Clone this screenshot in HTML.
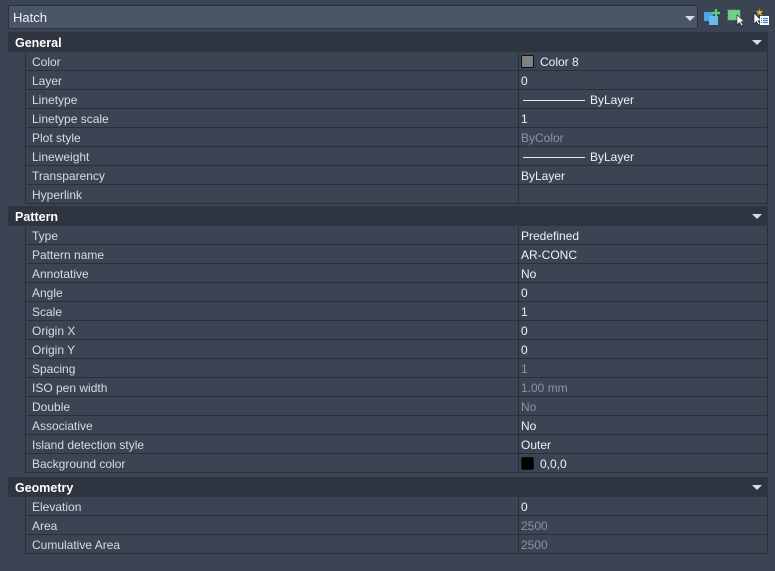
<!DOCTYPE html>
<html><head><style>
*{margin:0;padding:0;box-sizing:border-box}
body{width:775px;height:571px;background:#3b4453;font-family:"Liberation Sans",sans-serif;font-size:12px;color:#e6eaf0;position:relative;overflow:hidden}
.dd{position:absolute;left:8px;top:5px;width:690px;height:24px;background:#4a5568;border:1px solid #2c323d;border-radius:2px}
.dd span{position:absolute;left:4px;top:4px;font-size:13px;color:#eef1f5}
.tri{position:absolute;width:0;height:0;border-left:5px solid transparent;border-right:5px solid transparent;border-top:5px solid #d8dde5}
.hdr{position:absolute;left:8px;width:760px;height:20px;background:#2e3440}
.hdr b{position:absolute;left:7px;top:4px;font-size:12.5px;color:#fff}
.row{position:absolute;left:25px;width:743px;height:19px;border-left:1px solid #2a2f38;border-right:1px solid #2a2f38;border-bottom:1px solid #2a2f38;background:#3b4453}
.row .l{position:absolute;left:6px;top:3px;color:#d6dce6}
.row .v{position:absolute;left:492px;top:0;width:1px;height:18px;background:#2a2f38}
.row .t{position:absolute;left:495px;top:3px;color:#eef1f5}
.row .t.d{color:#8a93a2}
.line{display:inline-block;width:62px;border-top:1px solid #e6eaf0;vertical-align:middle;margin:0 5px 0 2px}
.sw{display:inline-block;width:13px;height:13px;vertical-align:-2px;border:1px solid #111;border-radius:2px;margin-right:6px}
</style></head><body>
<div class="dd"><span>Hatch</span><div class="tri" style="left:676px;top:10px"></div></div>
<svg style="position:absolute;left:703px;top:8px" width="68" height="18">
<rect x="1" y="4" width="9" height="9" fill="#4aa3e6"/><rect x="6" y="8" width="9" height="9" fill="#6ab8f0"/>
<path d="M13 1v8M9 5h8" stroke="#5fd07a" stroke-width="2.2"/>
<rect x="25" y="2" width="12" height="10" fill="#6fcf8b" stroke="#4fb86a" stroke-dasharray="2 1"/>
<path d="M34 7l0 10 2.5-2.5 2 3.5 1.5-1-2-3.5 3.5 0z" fill="#fff" stroke="#222" stroke-width="0.6"/>
<path d="M51 5l0 11 2.5-2.5 2 3.5 1.5-1-2-3.5 3.5 0z" fill="#fff" stroke="#222" stroke-width="0.6"/>
<path d="M56 0l1 3 3 0-2 2 1 3-3-2-2 2 1-3-2-2h3z" fill="#f2b233"/>
<rect x="57" y="8" width="9" height="9" fill="#fff"/><path d="M58 10.5h1M60 10.5h5M58 12.5h1M60 12.5h5M58 14.5h1M60 14.5h5" stroke="#3a8fd8" stroke-width="1.2"/>
</svg>

<div class="hdr" style="top:32px"><b>General</b><div class="tri" style="left:744px;top:8px"></div></div>
<div class="row" style="top:52px"><span class="l">Color</span><i class="v"></i><span class="t"><span class="sw" style="background:#808080"></span>Color 8</span></div>
<div class="row" style="top:71px"><span class="l">Layer</span><i class="v"></i><span class="t">0</span></div>
<div class="row" style="top:90px"><span class="l">Linetype</span><i class="v"></i><span class="t"><span class="line"></span>ByLayer</span></div>
<div class="row" style="top:109px"><span class="l">Linetype scale</span><i class="v"></i><span class="t">1</span></div>
<div class="row" style="top:128px"><span class="l">Plot style</span><i class="v"></i><span class="t d">ByColor</span></div>
<div class="row" style="top:147px"><span class="l">Lineweight</span><i class="v"></i><span class="t"><span class="line"></span>ByLayer</span></div>
<div class="row" style="top:166px"><span class="l">Transparency</span><i class="v"></i><span class="t">ByLayer</span></div>
<div class="row" style="top:185px"><span class="l">Hyperlink</span><i class="v"></i><span class="t"></span></div>

<div class="hdr" style="top:206px"><b>Pattern</b><div class="tri" style="left:744px;top:8px"></div></div>
<div class="row" style="top:226px"><span class="l">Type</span><i class="v"></i><span class="t">Predefined</span></div>
<div class="row" style="top:245px"><span class="l">Pattern name</span><i class="v"></i><span class="t">AR-CONC</span></div>
<div class="row" style="top:264px"><span class="l">Annotative</span><i class="v"></i><span class="t">No</span></div>
<div class="row" style="top:283px"><span class="l">Angle</span><i class="v"></i><span class="t">0</span></div>
<div class="row" style="top:302px"><span class="l">Scale</span><i class="v"></i><span class="t">1</span></div>
<div class="row" style="top:321px"><span class="l">Origin X</span><i class="v"></i><span class="t">0</span></div>
<div class="row" style="top:340px"><span class="l">Origin Y</span><i class="v"></i><span class="t">0</span></div>
<div class="row" style="top:359px"><span class="l">Spacing</span><i class="v"></i><span class="t d">1</span></div>
<div class="row" style="top:378px"><span class="l">ISO pen width</span><i class="v"></i><span class="t d">1.00 mm</span></div>
<div class="row" style="top:397px"><span class="l">Double</span><i class="v"></i><span class="t d">No</span></div>
<div class="row" style="top:416px"><span class="l">Associative</span><i class="v"></i><span class="t">No</span></div>
<div class="row" style="top:435px"><span class="l">Island detection style</span><i class="v"></i><span class="t">Outer</span></div>
<div class="row" style="top:454px"><span class="l">Background color</span><i class="v"></i><span class="t"><span class="sw" style="background:#000"></span>0,0,0</span></div>

<div class="hdr" style="top:477px"><b>Geometry</b><div class="tri" style="left:744px;top:8px"></div></div>
<div class="row" style="top:497px"><span class="l">Elevation</span><i class="v"></i><span class="t">0</span></div>
<div class="row" style="top:516px"><span class="l">Area</span><i class="v"></i><span class="t d">2500</span></div>
<div class="row" style="top:535px"><span class="l">Cumulative Area</span><i class="v"></i><span class="t d">2500</span></div>
</body></html>
